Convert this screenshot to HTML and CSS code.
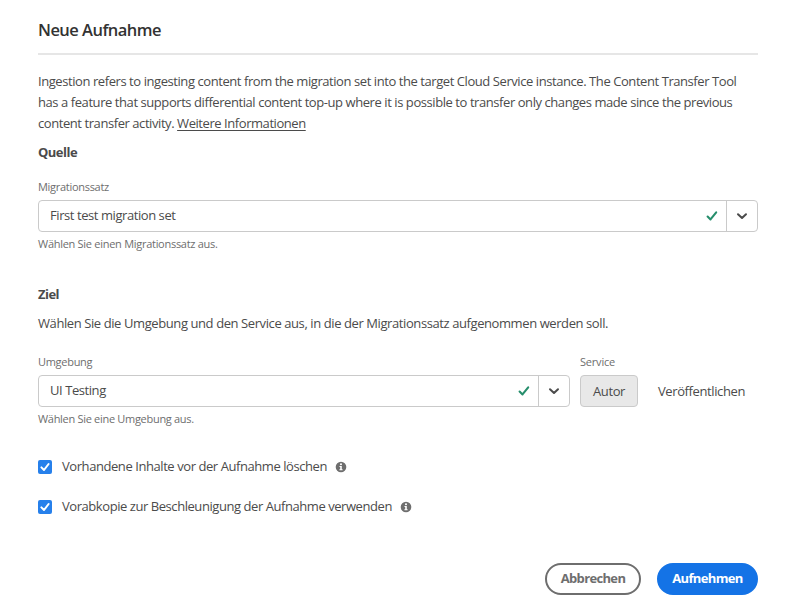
FILE: index.html
```html
<!DOCTYPE html>
<html lang="de">
<head>
<meta charset="utf-8">
<title>Neue Aufnahme</title>
<link rel="stylesheet" href="styles.css">
</head>
<body>
<svg width="0" height="0" class="defs">
  <symbol id="valid" viewBox="0 0 12 12"><path d="M1.6 6.6 4.5 9.4 10.2 2.4" fill="none" stroke="#268e6c" stroke-width="2.1" stroke-linecap="round" stroke-linejoin="round"/></symbol>
  <symbol id="chevron" viewBox="0 0 12 12"><path d="M2 4.2 6 8 10 4.2" fill="none" stroke="#4b4b4b" stroke-width="2" stroke-linecap="round" stroke-linejoin="round"/></symbol>
  <symbol id="tick" viewBox="0 0 14 14"><path d="M3.4 7.4 6 10 10.6 4" fill="none" stroke="#fff" stroke-width="2" stroke-linecap="round" stroke-linejoin="round"/></symbol>
  <symbol id="info" viewBox="0 0 12 12"><circle cx="6" cy="6" r="5.3" fill="#6e6e6e"/><circle cx="6" cy="3.3" r="1.05" fill="#fff"/><path d="M4.5 5.1H6.8V8.2H7.6V9.2H4.4V8.2H5.2V6.1H4.5Z" fill="#fff"/></symbol>
</svg>
<main class="dialog">
  <h1 class="title">Neue Aufnahme</h1>
  <p class="intro">Ingestion refers to ingesting content from the migration set into the target Cloud Service instance. The Content Transfer Tool<br>has a feature that supports differential content top-up where it is possible to transfer only changes made since the previous<br>content transfer activity. <a class="link">Weitere Informationen</a></p>

  <h2 class="heading">Quelle</h2>
  <section class="field source">
    <div class="label">Migrationssatz</div>
    <div class="combo">
      <span class="value">First test migration set</span>
      <svg class="valid"><use href="#valid"/></svg>
      <span class="toggle"><svg><use href="#chevron"/></svg></span>
    </div>
    <div class="hint">Wählen Sie einen Migrationssatz aus.</div>
  </section>

  <h2 class="heading target">Ziel</h2>
  <p class="desc">Wählen Sie die Umgebung und den Service aus, in die der Migrationssatz aufgenommen werden soll.</p>
  <div class="row">
    <section class="field env">
      <div class="label">Umgebung</div>
      <div class="combo">
        <span class="value">UI Testing</span>
        <svg class="valid"><use href="#valid"/></svg>
        <span class="toggle"><svg><use href="#chevron"/></svg></span>
      </div>
      <div class="hint env-hint">Wählen Sie eine Umgebung aus.</div>
    </section>
    <section class="field">
      <div class="label service">Service</div>
      <div class="tabs"><span class="tab selected">Autor</span><span class="tab">Veröffentlichen</span></div>
    </section>
  </div>

  <div class="checks">
    <div class="check"><span class="box"><svg><use href="#tick"/></svg></span><span class="text">Vorhandene Inhalte vor der Aufnahme löschen</span><svg class="info"><use href="#info"/></svg></div>
    <div class="check"><span class="box"><svg><use href="#tick"/></svg></span><span class="text second">Vorabkopie zur Beschleunigung der Aufnahme verwenden</span><svg class="info"><use href="#info"/></svg></div>
  </div>

  <div class="actions">
    <span class="button cancel">Abbrechen</span>
    <span class="button primary">Aufnehmen</span>
  </div>
</main>
</body>
</html>
```
FILE: styles.css
```css
* { box-sizing: border-box; }
body { margin: 0; background: #fff; }
.defs { display: block; }
.dialog {
  width: 720px;
  margin: 0 0 0 38px;
  padding-top: 18px;
  font: 13px/21px "Open Sans", "Noto Sans", sans-serif;
  letter-spacing: -0.43px;
  color: #4b4b4b;
  white-space: nowrap;
}
h1, h2, p { margin: 0; }
.title {
  height: 37px;
  border-bottom: 2px solid #e6e6e6;
  font-size: 16.5px;
  line-height: 24px;
  font-weight: 600;
  letter-spacing: -0.53px;
  color: #323232;
}
.intro { margin-top: 16px; }
.link { text-decoration: underline; text-underline-offset: 2px; letter-spacing: -0.44px; }
.heading { margin-top: 8px; font-size: 13px; line-height: 21px; font-weight: 700; letter-spacing: -0.52px; }
.source { margin-top: 15px; }
.label, .hint { font-size: 11px; color: #6e6e6e; letter-spacing: -0.29px; }
.label { height: 22px; line-height: 17px; }
.hint { height: 22px; line-height: 24px; letter-spacing: -0.28px; }
.env-hint { letter-spacing: -0.3px; }
.service { letter-spacing: -0.2px; }
.combo {
  display: flex;
  align-items: center;
  height: 32px;
  padding-left: 11px;
  border: 1px solid #cacaca;
  border-radius: 4px;
}
.value { flex: 1; padding-bottom: 2px; }
.valid { width: 12px; height: 12px; margin-right: 8px; }
.toggle {
  display: flex;
  align-items: center;
  justify-content: center;
  width: 32px;
  height: 30px;
  border-left: 1px solid #cacaca;
}
.source .toggle { width: 31px; }
.toggle svg { width: 12px; height: 12px; }
.target { margin-top: 30px; }
.desc { margin-top: 8px; letter-spacing: -0.41px; }
.row { display: flex; gap: 10px; margin-top: 19px; }
.env { flex: none; width: 532px; }
.env .toggle { width: 31px; }
.tabs { display: flex; gap: 7px; }
.tab { height: 32px; padding: 0 12px; border: 1px solid transparent; line-height: 30px; letter-spacing: -0.39px; }
.selected { width: 58px; background: #e8e8e8; border-color: #cacaca; border-radius: 4px; }
.checks { margin-top: 28px; }
.check { display: flex; align-items: center; height: 20px; margin-bottom: 20px; }
.text { padding-bottom: 2px; }
.box { display: flex; width: 14px; height: 14px; margin-right: 10px; border-radius: 2px; background: #2680eb; }
.box svg { width: 14px; height: 14px; }
.second { letter-spacing: -0.44px; }
.info { width: 12px; height: 12px; margin-left: 8px; }
.actions { display: flex; justify-content: flex-end; gap: 16px; margin-top: 46px; }
.button {
  height: 32px;
  border-radius: 16px;
  font-weight: 700;
  line-height: 26px;
  text-align: center;
  letter-spacing: -0.65px;
  border: 2px solid;
}
.cancel { width: 96px; border-color: #6e6e6e; color: #6e6e6e; }
.primary { width: 101px; background: #1473e6; border-color: #1473e6; color: #fff; }
```
